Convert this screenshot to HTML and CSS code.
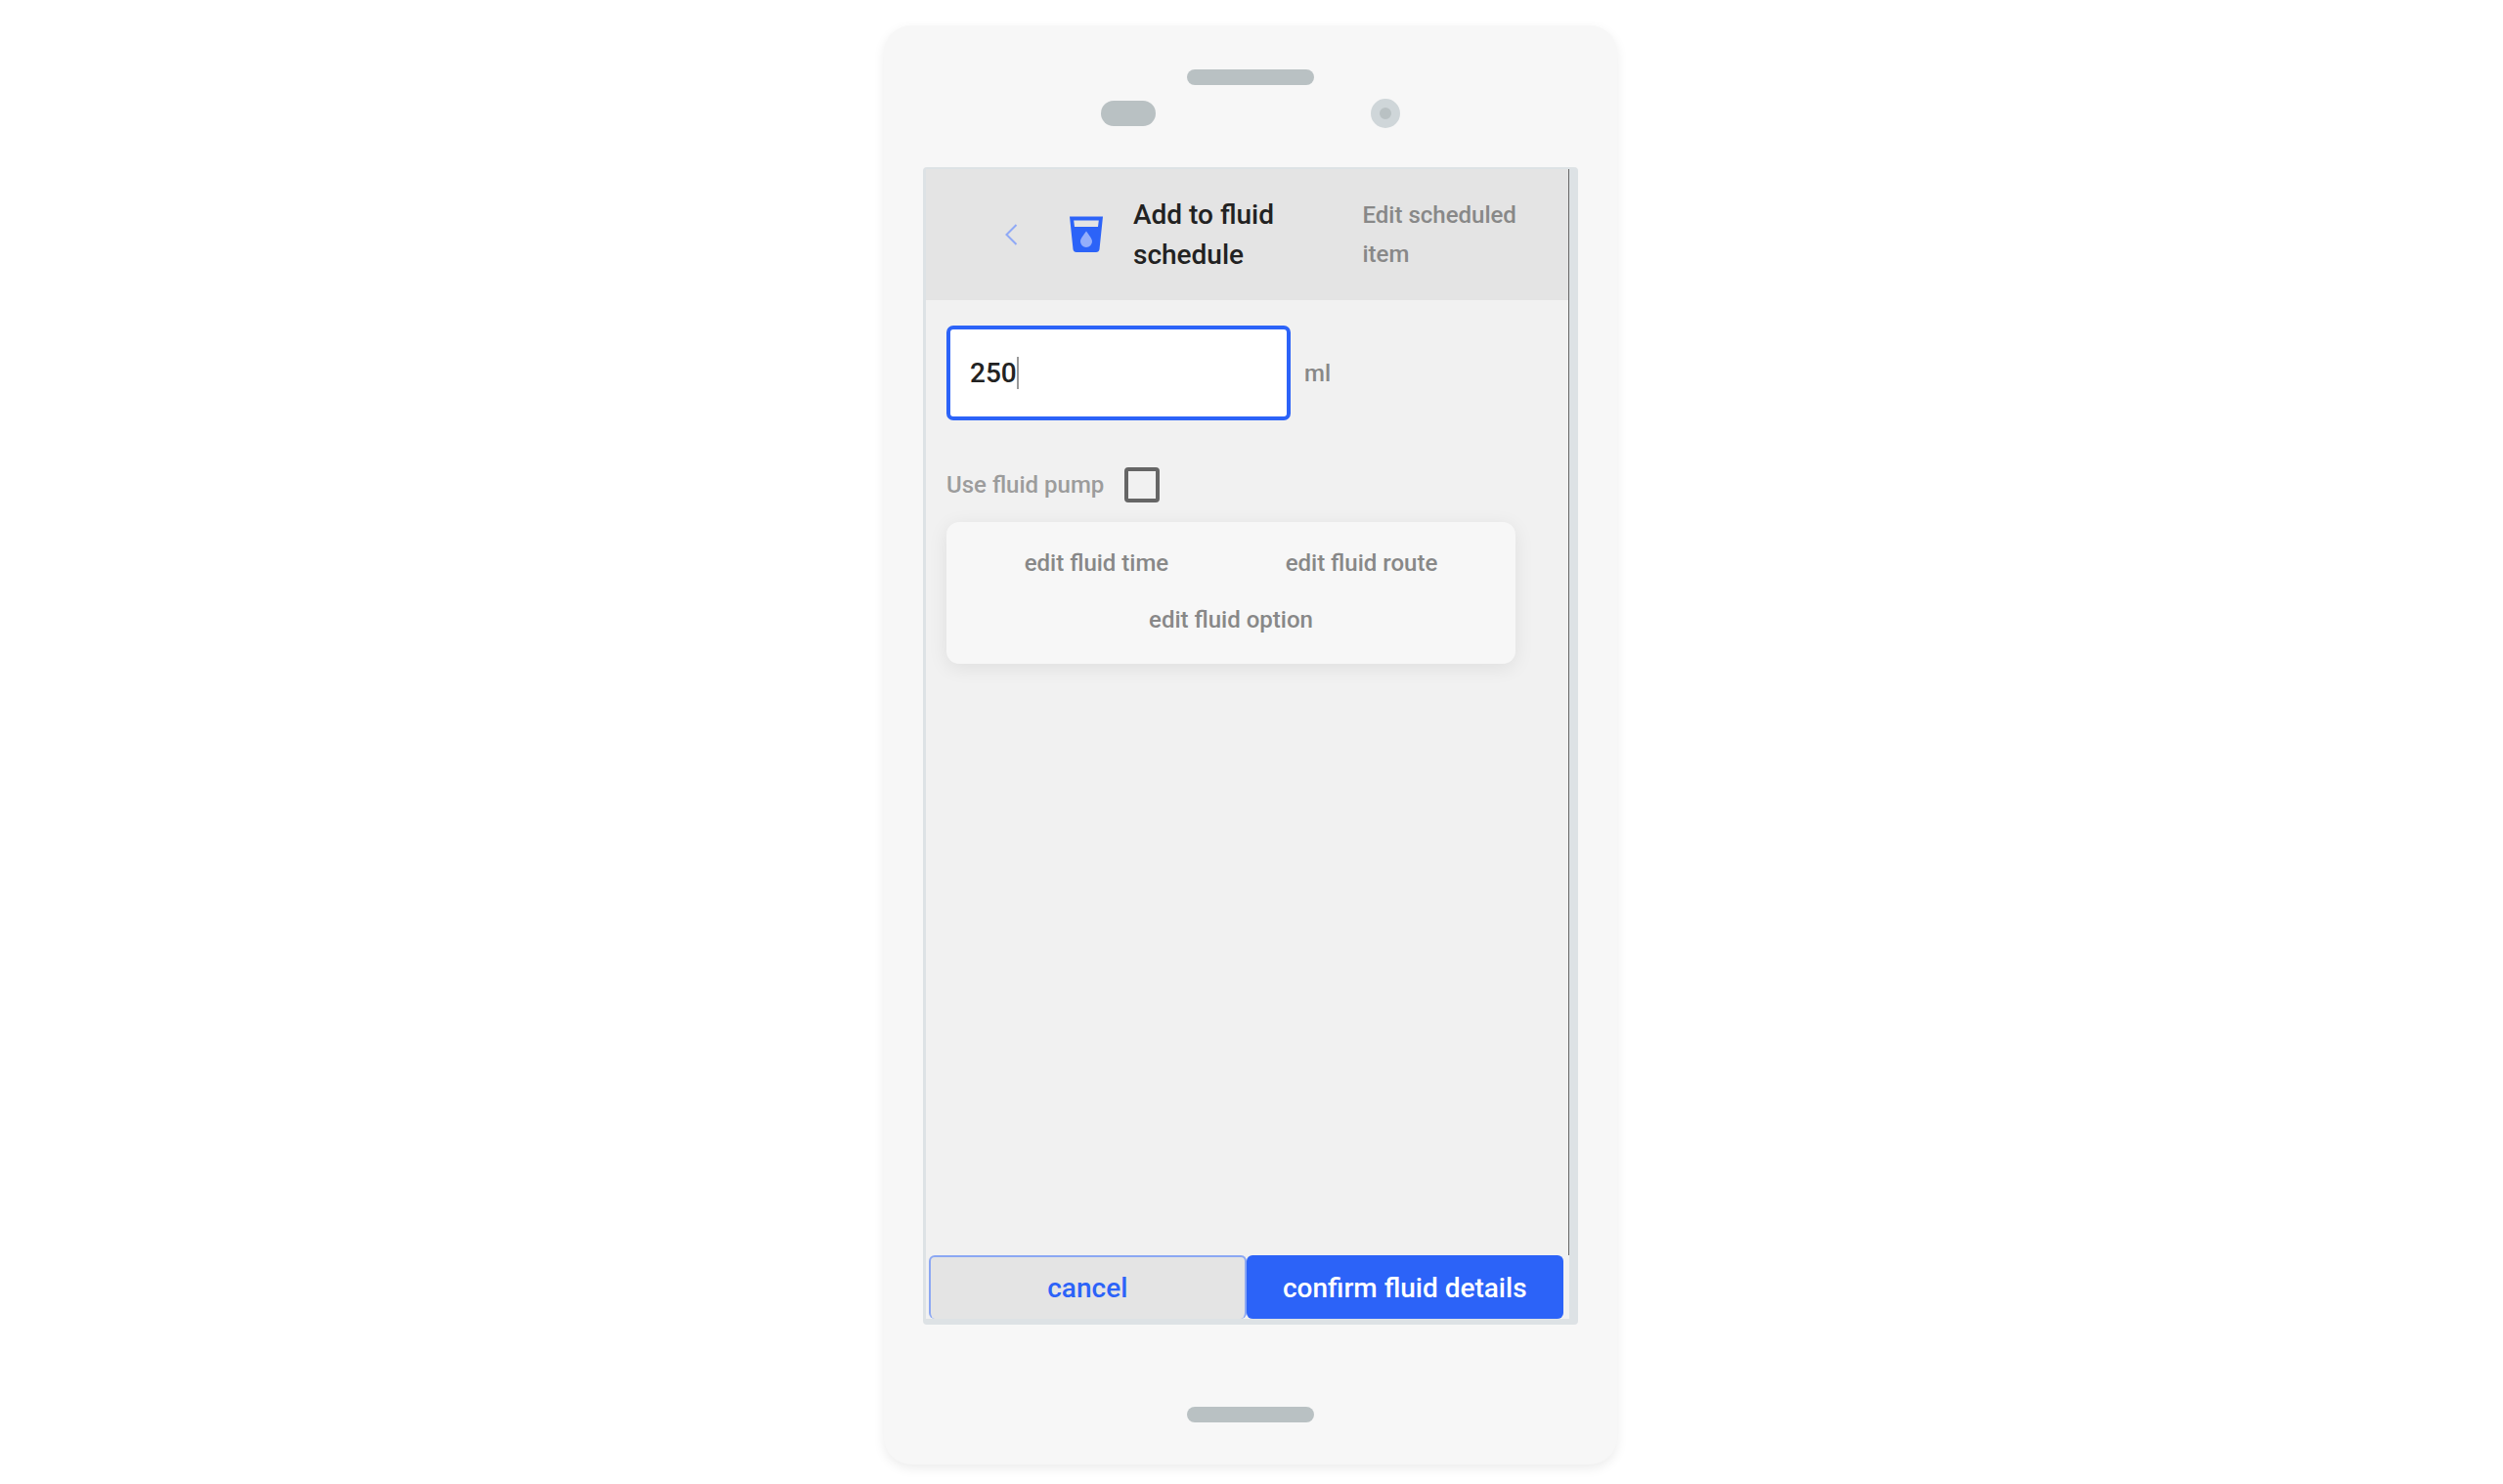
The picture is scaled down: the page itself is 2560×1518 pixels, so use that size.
FILE: index.html
```html
<!DOCTYPE html>
<html lang="en">
	<head>
		<meta charset="utf-8">
		<title>Add to fluid schedule</title>
		<link rel="stylesheet" href="styles.css">
	</head>
	<body>
		<div class="phone">
			<div class="phone-top">
				<div class="speaker"></div>
				<div class="sensors">
					<div class="sensor"></div>
					<div class="camera"></div>
				</div>
			</div>

			<form class="screen">
				<div class="page">
					<header class="header">
						<button type="button" class="back" aria-label="Back">
							<svg width="14" height="24" viewBox="0 0 14 24"><path d="M12.500 2 L2.500 12 L12.500 22" fill="none" stroke="#8fa9f6" stroke-width="2"/></svg>
						</button>
						<svg class="cup" width="36" height="38" viewBox="0 0 36 38">
							<path fill="#2c63f8" fill-rule="evenodd" d="M1 0.500 H35 L31.500 34 Q31 37 28 37 H8 Q5 37 4.500 34 Z M5.200 4.500 L6 11 H30 L30.800 4.500 Z"/>
							<path fill="#94aefb" d="M18 15.500 C21 20 24 23 24 26 A6 6 0 0 1 12 26 C12 23 15 20 18 15.500 Z"/>
						</svg>
						<h1 class="title">Add to fluid schedule</h1>
						<p class="subtitle">Edit scheduled item</p>
					</header>

					<main class="content">
						<div class="amount">
							<div class="amount-box">
								<input type="text" class="amount-input" id="amount" value="250" inputmode="numeric"/>
								<span class="caret"></span>
							</div>
							<label class="unit" for="amount">ml</label>
						</div>

						<div class="pump">
							<label for="pump">Use fluid pump</label>
							<input type="checkbox" class="pump-check" id="pump"/>
						</div>

						<div class="card">
							<button type="button" class="link">edit fluid time</button>
							<button type="button" class="link">edit fluid route</button>
							<button type="button" class="link">edit fluid option</button>
						</div>
					</main>
				</div>

				<footer class="actions">
					<button type="button" class="btn">cancel</button>
					<button type="submit" class="btn btn-primary">confirm fluid details</button>
				</footer>
			</form>

			<div class="phone-bottom">
				<div class="speaker"></div>
			</div>
		</div>
	</body>
</html>
```
FILE: styles.css
```css
* { box-sizing: border-box; }

body {
	margin: 0;
	padding: 26px 18px 20px 16px;
	background-color: white;
	font-family: Roboto, "Liberation Sans", sans-serif;
	font-size: 24px;
	font-weight: 500;
	line-height: 40px;
	color: #888;
}

button, input {
	font: inherit;
	color: inherit;
	margin: 0;
}

button {
	padding: 0;
	border: none;
	background: none;
	cursor: pointer;
}

/* phone frame */
.phone {
	display: flex;
	flex-direction: column;
	max-width: 750px;
	min-height: calc(100vh - 46px);
	margin: 0 auto;
	padding: 0 40px;
	border-radius: 28px;
	background-color: #f7f7f7;
	box-shadow: 0 4px 12px rgba(0, 0, 0, 0.08);
}

.phone-top {
	height: 145px;
	padding-top: 45px;
}

.speaker {
	width: 130px;
	height: 16px;
	margin: 0 auto;
	border-radius: 8px;
	background-color: #b9c1c3;
}

.sensors {
	display: flex;
	align-items: center;
	justify-content: space-between;
	width: 306px;
	margin: 14px auto 0;
}

.sensor {
	width: 56px;
	height: 26px;
	border-radius: 13px;
	background-color: #b9c1c3;
}

.camera {
	width: 30px;
	height: 30px;
	border: 9px solid #cfd6d9;
	border-radius: 50%;
	background-color: #b9c1c3;
}

.phone-bottom {
	height: 143px;
	padding-top: 84px;
}

/* screen */
.screen {
	display: flex;
	flex: 1;
	flex-direction: column;
	margin: 0;
	border: solid #dde2e5;
	border-width: 2px 9px 6px 3px;
	border-radius: 4px;
	background-color: #f1f1f1;
}

.page {
	flex: 1;
	border-right: 1px solid #666;
}

.header {
	display: flex;
	align-items: center;
	padding: 26px 24px 26px 80px;
	background-color: #e4e4e4;
}

.back {
	display: flex;
	margin-right: 52px;
}

.cup {
	flex: none;
	margin-right: 30px;
}

.title {
	flex: 1;
	margin: 0 48px 0 0;
	font-size: 28px;
	font-weight: 500;
	line-height: 41px;
	color: #222;
}

.subtitle {
	flex: 1;
	margin: 0;
}

.content {
	padding: 26px 54px 26px 21px;
}

.amount {
	display: flex;
	align-items: center;
	gap: 14px;
}

.amount-box {
	position: relative;
	width: 352px;
}

.amount-input {
	display: block;
	width: 100%;
	height: 97px;
	padding: 0 20px;
	border: 4px solid #2c63f8;
	border-radius: 7px;
	outline: none;
	background-color: white;
	font-size: 28px;
	color: #222;
}

.caret {
	position: absolute;
	top: 32px;
	left: 72px;
	width: 2px;
	height: 33px;
	background-color: #999;
}

.pump {
	display: flex;
	align-items: center;
	gap: 21px;
	margin: 46px 0 18px;
	color: #9c9c9c;
}

.pump-check {
	appearance: none;
	width: 36px;
	height: 36px;
	border: 4px solid #666;
	border-radius: 4px;
}

.card {
	display: flex;
	flex-wrap: wrap;
	justify-content: space-around;
	row-gap: 18px;
	padding: 22px 20px 25px;
	border-radius: 13px;
	background-color: #f7f7f7;
	box-shadow: 0 4px 20px rgba(0, 0, 0, 0.08);
}

.link {
	padding: 0 40px;
}

.actions {
	display: flex;
	padding: 0 6px 0 3px;
}

.btn {
	flex: 1;
	height: 65px;
	border: solid #8ba7f3;
	border-width: 2px 2px 0;
	border-radius: 6px;
	background-color: #e4e4e4;
	font-size: 28px;
	color: #2c63f8;
}

.btn-primary {
	border-color: #2c63f8;
	background-color: #2c63f8;
	color: white;
}
```
